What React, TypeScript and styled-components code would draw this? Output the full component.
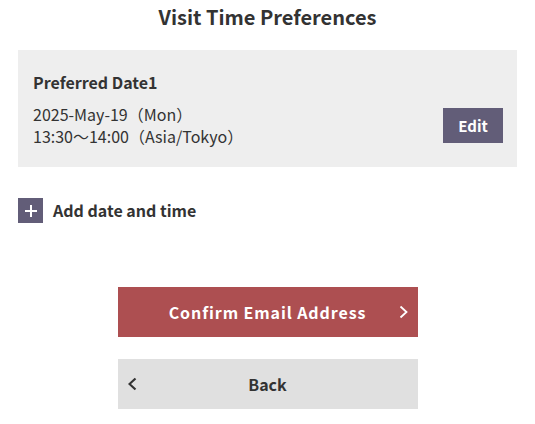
import React from "react";
import styled, { createGlobalStyle } from "styled-components";

const GlobalStyle = createGlobalStyle`
  body {
    margin: 0;
    background: #fff;
    font-family: "Noto Sans CJK JP", "Noto Sans", sans-serif;
    color: #333;
  }
`;

const Page = styled.div`
  width: 535px;
  padding: 0 18px;
  box-sizing: border-box;
`;

const Title = styled.h1`
  margin: 0;
  padding-top: 3px;
  font-size: 20px;
  line-height: 28px;
  font-weight: 700;
  text-align: center;
`;

const Card = styled.div`
  margin-top: 19px;
  background: #eeeeee;
  padding: 20px 14px 20px 15px;
  display: flex;
  flex-direction: column;
`;

const CardLabel = styled.div`
  font-size: 16px;
  line-height: 24px;
  font-weight: 700;
`;

const CardRow = styled.div`
  margin-top: 9px;
  display: flex;
  align-items: center;
  justify-content: space-between;
`;

const DateText = styled.div`
  font-size: 16px;
  line-height: 22px;
`;

const EditButton = styled.button`
  width: 60px;
  height: 35px;
  padding: 0;
  border: none;
  background: #625d78;
  color: #fff;
  font-family: inherit;
  font-size: 15px;
  font-weight: 700;
  cursor: pointer;
`;

const AddRow = styled.div`
  margin-top: 31px;
  display: flex;
  align-items: center;
  gap: 10px;
  font-size: 16px;
  line-height: 25px;
  font-weight: 700;
`;

const PlusBox = styled.span`
  width: 25px;
  height: 25px;
  background: #625d78;
  display: flex;
  align-items: center;
  justify-content: center;
`;

const Actions = styled.div`
  margin-top: 64px;
  display: flex;
  flex-direction: column;
  align-items: center;
  gap: 22px;
`;

const ActionButton = styled.button<{ $primary?: boolean }>`
  position: relative;
  width: 300px;
  height: 50px;
  padding: 0;
  border: none;
  background: ${(p) => (p.$primary ? "#ad4f51" : "#e0e0e0")};
  color: ${(p) => (p.$primary ? "#fff" : "#333")};
  font-family: inherit;
  font-size: 16px;
  font-weight: 700;
  letter-spacing: ${(p) => (p.$primary ? "0.9px" : "0")};
  cursor: pointer;
`;

const Chevron = styled.svg<{ $side: "left" | "right" }>`
  position: absolute;
  top: 50%;
  transform: translateY(-50%);
  ${(p) => (p.$side === "left" ? "left: 10px;" : "right: 10px;")}
`;

const App = () => (
  <>
    <GlobalStyle />
    <Page>
      <Title>Visit Time Preferences</Title>
      <Card>
        <CardLabel>Preferred Date1</CardLabel>
        <CardRow>
          <DateText>
            2025-May-19（Mon）
            <br />
            13:30～14:00（Asia/Tokyo）
          </DateText>
          <EditButton>Edit</EditButton>
        </CardRow>
      </Card>
      <AddRow>
        <PlusBox>
          <svg width="14" height="14" viewBox="0 0 14 14">
            <path d="M7 1v12M1 7h12" stroke="#fff" strokeWidth="2" />
          </svg>
        </PlusBox>
        Add date and time
      </AddRow>
      <Actions>
        <ActionButton $primary>
          Confirm Email Address
          <Chevron $side="right" width="9" height="13" viewBox="0 0 9 13">
            <path d="M1.5 1l6 5.5-6 5.5" stroke="#fff" strokeWidth="1.8" fill="none" />
          </Chevron>
        </ActionButton>
        <ActionButton>
          Back
          <Chevron $side="left" width="9" height="13" viewBox="0 0 9 13">
            <path d="M7.5 1l-6 5.5 6 5.5" stroke="#333" strokeWidth="2.2" fill="none" />
          </Chevron>
        </ActionButton>
      </Actions>
    </Page>
  </>
);

export default App;
